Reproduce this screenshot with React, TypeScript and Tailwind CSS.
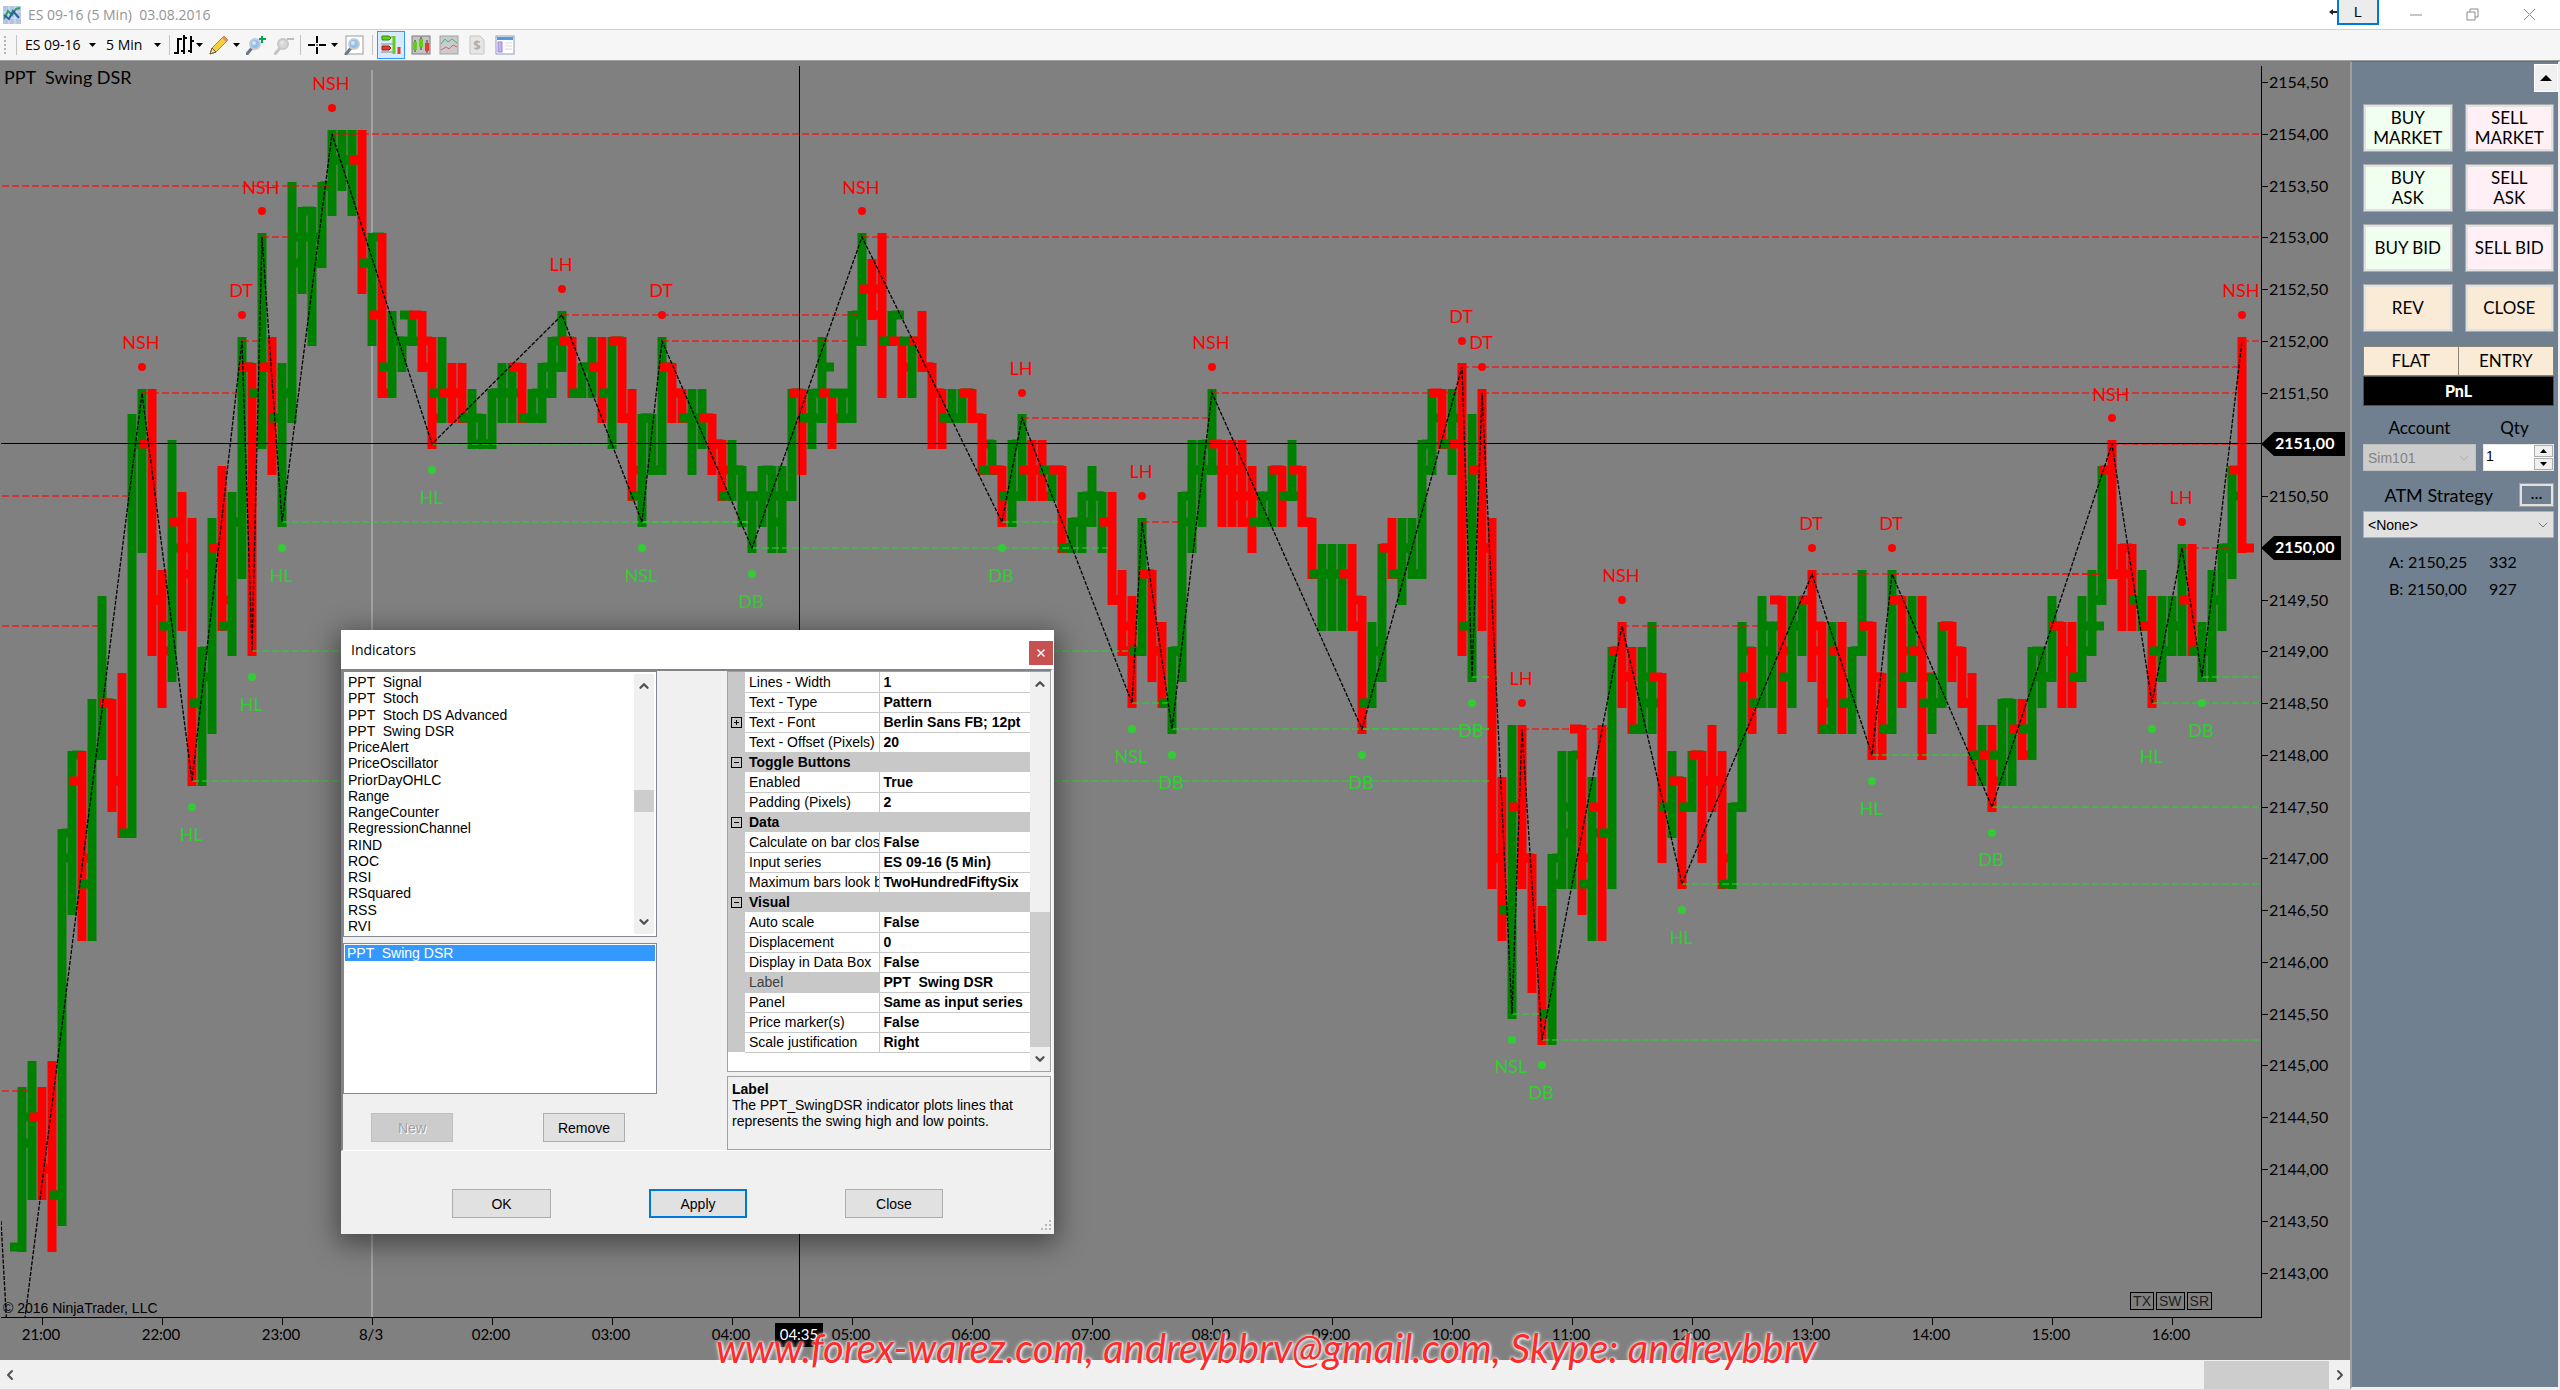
import React from "react";
import { ChevronDown, ChevronLeft, ChevronRight, ChevronUp, X } from "lucide-react";

/* ---------- chart data: one entry per 5 minute bar, in quarter-point ticks above 2143,00 ---------- */

const BARS = `
g1,7,1,5 g6,8,3,6 r6,7,3,4 r4,8,1,3 g3,17,2,17 g16,20,14,20 r19,20,13,16 g15,22,13,20 g20,26,20,22 r22,22,18,19
r19,23,17,17 g17,33,17,32 g32,34,28,32 r32,34,24,26 r26,27,22,24 g25,32,23,28 r29,30,25,28 r27,29,19,22 g22,24,19,23 g24,29,21,28
r28,31,25,26 g25,30,24,29 g29,36,27,35 r35,35,24,34 g34,40,32,35 r35,36,31,33 g33,35,29,34 g34,42,33,39 g40,41,38,41 g40,41,36,40
g39,42,39,42 g42,44,41,43 g43,44,42,43 g43,44,41,43 r43,44,38,39 g39,40,36,40 r37,40,34,34 g35,37,34,36 g36,36,35,36 g37,37,36,36
r37,37,35,35 r36,36,32,33 g34,36,33,34 r34,35,33,34 r34,35,33,33 g33,34,32,32 g33,33,32,32 g32,34,32,34 g34,35,33,34 g34,35,33,34
r35,35,33,33 g33,34,33,34 g33,35,33,35 g34,36,34,36 g35,37,35,36 r36,36,34,34 g34,35,34,35 g35,36,34,35 r35,36,33,34 g34,36,32,36
r36,36,33,33 r33,34,30,31 g30,33,29,33 g33,33,31,31 g31,36,31,35 r35,35,33,34 r34,34,33,33 g33,34,31,33 g33,34,32,33 r33,33,31,32
r32,32,30,31 g30,32,30,31 g31,31,29,30 g30,30,28,30 g30,31,29,31 g30,31,28,30 g29,31,28,30 g30,34,30,34 r34,34,31,33 g33,34,32,34
g33,36,33,35 r34,34,32,33 g34,34,33,34 g33,37,33,37 g36,40,36,38 r38,39,37,37 r38,40,34,36 g36,37,36,37 r36,36,34,35 g36,36,34,36
r36,37,35,35 r35,35,32,34 r34,34,32,33 g33,34,33,33 g33,34,33,34 r34,34,33,33 r33,33,31,32 g31,32,31,31 r31,31,29,30 g30,32,29,32
g30,33,30,31 r31,32,30,31 r31,32,30,30 g31,31,30,31 r31,31,28,28 g28,29,28,29 g29,30,28,30 g29,31,29,30 g30,30,28,29 r29,30,26,26
r26,27,24,25 r24,26,22,24 g24,29,24,27 r27,27,23,24 r24,25,22,22 g22,24,21,24 g24,30,23,30 g29,32,28,31 g31,32,29,32 g31,34,31,31
r32,32,29,31 r31,32,29,31 r30,32,29,29 r30,31,28,30 g29,30,29,30 g29,31,29,31 r31,31,29,30 g30,32,30,30 r31,31,29,29 r29,29,27,27
g27,28,25,27 g27,28,25,27 g27,28,25,27 r27,28,25,25 r26,26,21,22 g22,25,22,24 g23,28,23,28 r28,29,27,27 g27,29,26,28 g28,29,27,27
g27,32,27,32 g31,34,31,33 r34,34,32,32 g32,34,31,33 r32,35,24,25 g25,33,23,31 r31,34,25,28 r28,29,15,16 r16,19,13,14 g14,21,10,18
r18,21,15,16 r16,16,11,13 r13,14,9,10 g10,16,9,16 g15,20,15,18 g17,20,15,20 r21,21,14,16 g15,19,13,17 r18,21,13,17 g17,24,15,24
r24,25,22,23 r23,24,21,21 g21,24,21,23 g22,25,21,22 r23,23,16,18 g18,20,17,19 r19,19,15,18 g18,20,18,20 r20,20,16,19 r19,21,18,19
r19,20,15,16 g15,18,15,18 g18,25,18,24 r23,24,21,22 g22,26,22,25 g24,25,22,25 r26,26,21,24 g23,26,22,25 g25,26,24,26 r26,27,23,25
r24,25,21,22 g21,25,21,24 r24,25,21,22 g22,24,21,24 g24,27,24,25 r25,25,20,23 r23,23,20,21 g21,27,21,26 r26,26,22,24 g23,26,23,24
r24,26,20,23 g22,23,21,22 g22,25,22,25 r25,25,23,24 r24,24,22,22 r22,23,19,20 g20,21,19,20 r20,21,18,19 g20,22,19,22 g22,22,19,21
r21,22,20,20 g21,24,20,24 g23,24,22,23 g23,26,23,25 r25,25,22,24 r24,25,22,23 g23,26,23,25 g24,27,24,25 g26,31,26,31 r31,32,27,27
r27,28,25,27 r28,28,25,26 g26,27,25,25 r25,26,22,24 g24,26,23,24 g24,26,24,25 g25,28,24,26 r26,28,24,24 g24,25,23,24 g24,27,23,26
g26,28,25,28 g28,31,27,30 r31,36,28,28`
  .trim()
  .split(/\s+/)
  .map((bar, i) => {
    const [open, high, low, close] = bar.slice(1).split(",").map(Number);
    return { x: 22 + i * 10, up: bar[0] === "g", open, high, low, close };
  });

type Swing = [number, number, string, "high" | "low"];
const SWINGS: Swing[] = [
  [142, 34, "NSH", "high"], [192, 19, "HL", "low"], [242, 36, "DT", "high"], [252, 24, "HL", "low"],
  [262, 40, "NSH", "high"], [282, 29, "HL", "low"], [332, 44, "NSH", "high"], [432, 32, "HL", "low"],
  [562, 37, "LH", "high"], [642, 29, "NSL", "low"], [662, 36, "DT", "high"], [752, 28, "DB", "low"],
  [862, 40, "NSH", "high"], [1002, 29, "DB", "low"], [1022, 33, "LH", "high"], [1132, 22, "NSL", "low"],
  [1142, 29, "LH", "high"], [1172, 21, "DB", "low"], [1212, 34, "NSH", "high"], [1362, 21, "DB", "low"],
  [1462, 35, "DT", "high"], [1472, 23, "DB", "low"], [1482, 34, "DT", "high"], [1512, 10, "NSL", "low"],
  [1522, 21, "LH", "high"], [1542, 9, "DB", "low"], [1622, 25, "NSH", "high"], [1682, 15, "HL", "low"],
  [1812, 27, "DT", "high"], [1872, 20, "HL", "low"], [1892, 27, "DT", "high"], [1992, 18, "DB", "low"],
  [2112, 32, "NSH", "high"], [2152, 22, "HL", "low"], [2182, 28, "LH", "high"], [2202, 23, "DB", "low"],
  [2242, 36, "NSH", "high"],
];

/* from x, to x, tick level */
const RESISTANCE = [
  [2, 330, 42], [332, 2260, 44], [262, 290, 40], [242, 258, 36], [142, 238, 34], [2, 128, 30], [2, 98, 25],
  [2, 28, 7], [862, 2260, 40], [562, 858, 37], [662, 848, 36], [1022, 1210, 33], [1142, 1180, 29],
  [1212, 1458, 34], [1462, 2240, 35], [1482, 2240, 34], [1522, 1608, 21], [1622, 1758, 25],
  [1812, 2100, 27], [1892, 2100, 27], [2112, 2238, 32], [2182, 2230, 28], [2242, 2260, 36],
];
const SUPPORT = [
  [252, 1128, 24], [192, 1489, 19], [282, 748, 29], [642, 748, 29], [432, 628, 32], [752, 1108, 28],
  [1002, 1058, 29], [1132, 1168, 22], [1172, 1489, 21], [1362, 1489, 21], [1472, 1489, 23],
  [1512, 1540, 10], [1542, 2260, 9], [1682, 2260, 15], [1872, 1970, 20], [1992, 2260, 18],
  [2152, 2260, 22], [2202, 2260, 23],
];

const TIMES: [number, string][] = [
  [42, "21:00"], [162, "22:00"], [282, "23:00"], [372, "8/3"], [492, "02:00"], [612, "03:00"], [732, "04:00"],
  [852, "05:00"], [972, "06:00"], [1092, "07:00"], [1212, "08:00"], [1332, "09:00"], [1452, "10:00"],
  [1572, "11:00"], [1692, "12:00"], [1812, "13:00"], [1932, "14:00"], [2052, "15:00"], [2172, "16:00"],
];

const TOP = 61;
const yOf = (tick: number) => Math.round(1272.5 - TOP - tick * 25.88);
const priceLabel = (tick: number) => (2143 + tick / 4).toFixed(2).replace(".", ",");

function Chart() {
  const axisY = 1317 - TOP;
  const zigzag = SWINGS.map(([x, t]) => `${x},${yOf(t)}`).join(" ");
  return (
    <svg
      viewBox="0 0 2350 1299"
      preserveAspectRatio="xMinYMin meet"
      className="block h-full w-full font-['Lato',sans-serif]"
      role="img"
      aria-label="ES 09-16 five minute price chart"
    >
      <defs>
        <clipPath id="plot">
          <rect x="1" y="0" width="2260" height={axisY} />
        </clipPath>
      </defs>
      <g clipPath="url(#plot)">
        <line x1="372" x2="372" y1="9" y2={axisY} stroke="#c4c4c4" />
        {BARS.map((b) => (
          <path
            key={b.x}
            d={`M${b.x} ${yOf(b.high) - 4}V${yOf(b.low) + 5}M${b.x - 12} ${yOf(b.open)}H${b.x}M${b.x} ${yOf(b.close)}H${b.x + 12}`}
            stroke={b.up ? "#008000" : "#ff0000"}
            strokeWidth="9"
          />
        ))}
        {RESISTANCE.map(([a, b, t], i) => (
          <line key={i} x1={a} x2={b} y1={yOf(t)} y2={yOf(t)} stroke="#ff0000" strokeOpacity="0.55" strokeWidth="2" strokeDasharray="7 3" />
        ))}
        {SUPPORT.map(([a, b, t], i) => (
          <line key={i} x1={a} x2={b} y1={yOf(t)} y2={yOf(t)} stroke="#32cd32" strokeOpacity="0.55" strokeWidth="2" strokeDasharray="7 3" />
        ))}
        <polyline points={`1,1160 12,1360 ${zigzag}`} fill="none" stroke="#000" strokeWidth="1.3" strokeDasharray="4 1.5" />
        {SWINGS.map(([x, t, label, kind]) => {
          const dir = kind === "high" ? 1 : -1;
          const color = kind === "high" ? "#ff0000" : "#32cd32";
          return (
            <g key={x} fill={color}>
              <circle cx={x} cy={yOf(t + dir)} r="4" />
              <text x={x - 1} y={yOf(t + 2 * dir) + 8} fontSize="18" textAnchor="middle">
                {label}
              </text>
            </g>
          );
        })}
        <path d={`M0 382H2261M799 5V${axisY}`} stroke="#000" shapeRendering="crispEdges" />
      </g>
      <text x="4" y="23" fontSize="18" xmlSpace="preserve" className="whitespace-pre">
        {"PPT  Swing DSR"}
      </text>
      <text x="3" y="1252" fontSize="14" className="font-['Liberation_Sans',Arial,sans-serif]">
        © 2016 NinjaTrader, LLC
      </text>

      <path d={`M2261 5V${axisY}H1`} fill="none" stroke="#000" strokeWidth="1" shapeRendering="crispEdges" />
      {Array.from({ length: 24 }, (_, i) => i * 2).map((t) => (
        <g key={t}>
          <line x1="2261" x2="2268" y1={yOf(t)} y2={yOf(t)} stroke="#000" shapeRendering="crispEdges" />
          <text x="2269" y={yOf(t) + 6} fontSize="16">
            {priceLabel(t)}
          </text>
        </g>
      ))}
      {[
        [32, 2345],
        [28, 2341],
      ].map(([t, right]) => (
        <g key={t}>
          <path d={`M2261 ${yOf(t)}L2274 ${yOf(t) - 12}H${right}V${yOf(t) + 12}H2274Z`} />
          <text x="2275" y={yOf(t) + 5} fontSize="16" fill="#fff" className="font-bold">
            {priceLabel(t)}
          </text>
        </g>
      ))}
      {TIMES.map(([x, label]) => (
        <g key={x}>
          <line x1={x} x2={x} y1={axisY} y2={axisY + 8} stroke="#000" shapeRendering="crispEdges" />
          <text x={x - 1} y="1279" fontSize="15" textAnchor="middle">
            {label}
          </text>
        </g>
      ))}
      <rect x="775" y="1262" width="48" height="24" />
      <text x="799" y="1279" fontSize="15" fill="#fff" textAnchor="middle">
        04:35
      </text>
    </svg>
  );
}

/* ---------- toolbar ---------- */

function Caret() {
  return (
    <svg viewBox="0 0 7 4" className="h-1 w-[7px]" aria-hidden="true">
      <path d="M0 0H7L3.5 4Z" fill="#000" />
    </svg>
  );
}

function Separator() {
  return <div className="h-5 w-px bg-[#c3c3c3]" />;
}

function Icon({ children, label }: { children: React.ReactNode; label: string }) {
  return (
    <svg viewBox="0 0 20 20" className="size-5" role="img" aria-label={label} fill="none">
      {children}
    </svg>
  );
}

function Lens({ x = 0, y = 0, muted = false }: { x?: number; y?: number; muted?: boolean }) {
  return (
    <g transform={`translate(${x} ${y})`}>
      <path d="M1 19L6 13" stroke={muted ? "#c4c4c4" : "#6e7884"} strokeWidth="3" strokeLinecap="round" />
      <circle cx="9" cy="9" r="5" fill={muted ? "#d6d6d6" : "#8fc1ea"} stroke={muted ? "#c8c8c8" : "#c3ccd4"} strokeWidth="2" />
      <circle cx="8" cy="8" r="2" fill={muted ? "#e4e4e4" : "#cfe6fa"} />
    </g>
  );
}

function Toolbar() {
  return (
    <div className="flex h-8 shrink-0 items-center border-t border-[#d0d0d0] border-b border-b-[#a0a0a0] bg-[#f6f6f6] font-['Open_Sans','Noto_Sans',sans-serif] text-sm text-black">
      <div className="ml-1 mr-2.5 grid gap-0.5">
        {[0, 1, 2, 3, 4].map((d) => (
          <span key={d} className="size-0.5 bg-[#b4b4b4]" />
        ))}
      </div>
      <Separator />
      <button className="ml-2 flex items-center gap-2">
        <span className="w-14 text-left whitespace-nowrap">ES 09-16</span>
        <Caret />
      </button>
      <button className="ml-2.5 mr-2 flex items-center gap-2">
        <span className="w-10 text-left whitespace-nowrap">5 Min</span>
        <Caret />
      </button>
      <Separator />
      <button className="ml-1 flex items-center gap-0.5">
        <Icon label="Chart style">
          <path d="M4 3V19M0 18H4M4 4H8M10 0V19M7 16H10M10 3H13M17 1V18M14 16H17M17 6H20" stroke="#000" strokeWidth="2" />
        </Icon>
        <Caret />
      </button>
      <button className="ml-1.5 flex items-center gap-1">
        <Icon label="Drawing tools">
          <path d="M1 19L3 13L15 1L19 5L7 17Z" fill="#f6cf3a" stroke="#b98b1c" />
          <path d="M13 3L15 1L19 5L17 7Z" fill="#e98a7c" />
          <path d="M1 19L3 13L7 17Z" fill="#e8d6b4" stroke="#6b5a35" />
        </Icon>
        <Caret />
      </button>
      <button className="ml-1.5">
        <Icon label="Zoom in">
          <Lens />
          <path d="M13 4H20M16 1V8" stroke="#00a651" strokeWidth="2" />
        </Icon>
      </button>
      <button className="ml-2" disabled>
        <Icon label="Zoom out">
          <Lens muted />
          <path d="M13 4H20" stroke="#bdbdbd" strokeWidth="2" />
        </Icon>
      </button>
      <div className="mx-1.5 flex h-5">
        <Separator />
      </div>
      <button className="flex items-center gap-1">
        <Icon label="Crosshair">
          <path d="M10 1V8M10 12V19M1 10H8M12 10H19" stroke="#000" strokeWidth="2" />
          <path d="M9 10H11" stroke="#000" />
        </Icon>
        <Caret />
      </button>
      <button className="ml-1.5">
        <Icon label="Data box">
          <rect x="2" y="1" width="17" height="18" fill="#fff" stroke="#9b9b9b" />
          <Lens x={1} y={0} />
        </Icon>
      </button>
      <div className="mr-1 ml-2">
        <Separator />
      </div>
      <button className="flex h-7 w-7 items-center justify-center border border-[#3399ff] bg-[#d6ebff]" aria-pressed="true">
        <Icon label="Chart trader">
          <path d="M0 2H12M0 9H12M0 17H12" stroke="#b9b9b9" strokeWidth="2" />
          <path d="M1 1H8L10 3L8 5H1Z" fill="#5ed016" stroke="#3b8a0b" />
          <path d="M1 11H8L10 13L8 15H1Z" fill="#e43b2e" stroke="#9a1e15" />
          <path d="M13 1V19" stroke="#5ed016" strokeWidth="3" />
          <path d="M18 12V19" stroke="#e43b2e" strokeWidth="3" />
        </Icon>
      </button>
      <button className="ml-1.5">
        <Icon label="Chart bars">
          <rect x="1" y="1" width="18" height="18" fill="#c4c4c4" stroke="#7b7b7b" />
          <path d="M4 5V17M10 2V15M16 5V18" stroke="#333" />
          <path d="M4 7V15M10 4V12" stroke="#5ed016" strokeWidth="4" />
          <path d="M16 8V16" stroke="#e43b2e" strokeWidth="4" />
        </Icon>
      </button>
      <button className="ml-2">
        <Icon label="Indicators">
          <rect x="1" y="1" width="18" height="18" fill="#cbcbcb" stroke="#a3a3a3" />
          <path d="M2 9L6 4L9 7L13 4L18 8" stroke="#44b37a" />
          <path d="M2 15L7 12L10 14L14 10L18 12" stroke="#e4605c" />
        </Icon>
      </button>
      <button className="ml-2" disabled>
        <Icon label="Strategies">
          <path d="M3 1H13L17 5V19H3Z" fill="#e6e6e6" stroke="#c6c6c6" />
          <text x="10" y="15" fontSize="13" textAnchor="middle" fill="#adadad" className="font-bold">
            $
          </text>
        </Icon>
      </button>
      <button className="ml-2">
        <Icon label="Properties">
          <rect x="1" y="1" width="18" height="18" fill="#fff" stroke="#8e9bb5" />
          <rect x="2" y="2" width="16" height="3" fill="#4d9be8" />
          <rect x="3" y="7" width="4" height="10" fill="#c4b0f4" stroke="#9b86e0" />
          <path d="M10 8H17M10 11H17M10 14H17" stroke="#dadada" />
        </Icon>
      </button>
    </div>
  );
}

function TitleBar() {
  return (
    <header className="flex h-[29px] shrink-0 items-center bg-white font-['Open_Sans','Noto_Sans',sans-serif] text-sm text-[#949494]">
      <svg viewBox="0 0 18 18" className="ml-[3px] size-[18px]" aria-hidden="true">
        <rect width="18" height="18" fill="#b5c4e4" />
        <path d="M0 6H18M0 12H18M6 0V18M12 0V18" stroke="#dfe6f4" />
        <path d="M1 13L5 5L9 9L13 3L17 2" stroke="#2fa45c" strokeWidth="2" fill="none" />
        <path d="M1 9L6 13L10 5L16 12" stroke="#2d5fa8" strokeWidth="2" fill="none" />
      </svg>
      <h1 className="ml-[7px] whitespace-pre">{"ES 09-16 (5 Min)  03.08.2016"}</h1>
      <div className="ml-auto flex h-full items-center">
        <svg viewBox="0 0 8 8" className="mb-1.5 size-2" aria-hidden="true">
          <path d="M0 4L4 1V7Z" fill="#222" />
          <path d="M3 4H8" stroke="#222" strokeWidth="2" />
        </svg>
        <button className="-mt-1 mr-[26px] h-[29px] w-[42px] self-start border-2 border-[#0078d7] bg-[#ececec] pt-0.5 font-['Liberation_Sans',Arial,sans-serif] text-sm text-black">
          L
        </button>
        <button aria-label="Minimize" className="flex w-[22px] justify-center">
          <svg viewBox="0 0 12 12" className="size-3" stroke="#8c8c8c"><path d="M0 6H12" /></svg>
        </button>
        <button aria-label="Restore" className="ml-[34px] flex w-[22px] justify-center">
          <svg viewBox="0 0 13 13" className="size-[13px]" stroke="#8c8c8c" fill="none">
            <path d="M1 4H9V12H1ZM4 4V1H12V9H9" />
          </svg>
        </button>
        <button aria-label="Close" className="mr-5 ml-[35px] flex w-[22px] justify-center">
          <svg viewBox="0 0 13 13" className="size-[13px]" stroke="#8c8c8c"><path d="M1 1L12 12M12 1L1 12" /></svg>
        </button>
      </div>
    </header>
  );
}

/* ---------- order panel ---------- */

const ORDERS = [
  { lines: ["BUY", "MARKET"], tone: "bg-[#f0fff0]" },
  { lines: ["SELL", "MARKET"], tone: "bg-[#fff0f5]" },
  { lines: ["BUY", "ASK"], tone: "bg-[#f0fff0]" },
  { lines: ["SELL", "ASK"], tone: "bg-[#fff0f5]" },
  { lines: ["BUY BID"], tone: "bg-[#f0fff0]" },
  { lines: ["SELL BID"], tone: "bg-[#fff0f5]" },
  { lines: ["REV"], tone: "bg-[#faebd7]" },
  { lines: ["CLOSE"], tone: "bg-[#faebd7]" },
];

function OrderPanel() {
  return (
    <aside className="flex w-[210px] shrink-0 flex-col border-x-2 border-t border-b-[3px] border-[#a0a0a0] border-t-[#696969] border-r-[#f0f0f0] border-b-[#f0f0f0] bg-[#708090] font-['Lato',sans-serif] text-[17px] leading-5 text-black">
      <button aria-label="Collapse" className="mt-0.5 flex h-7 w-6 items-center justify-center self-end border border-white bg-[#f0f0f0]">
        <svg viewBox="0 0 12 6" className="h-1.5 w-3" aria-hidden="true">
          <path d="M0 6H12L6 0Z" />
        </svg>
      </button>
      <div className="mr-1 ml-[11px] pt-3">
        <div className="grid grid-cols-2 gap-3">
          {ORDERS.map((o) => (
            <button key={o.lines.join(" ")} className="h-12 border border-[#a9a9a9] bg-[#e1e1e1] p-0.5">
              <span className={`flex h-full w-full flex-col items-center justify-center whitespace-nowrap ${o.tone}`}>
                {o.lines.map((l) => (
                  <span key={l}>{l}</span>
                ))}
              </span>
            </button>
          ))}
        </div>
        <div className="mt-[14px] grid grid-cols-2 divide-x divide-[#8a8378] border border-[#8a8378]">
          <button className="h-7 bg-[#faebd7]">FLAT</button>
          <button className="h-7 bg-[#faebd7]">ENTRY</button>
        </div>
        <output className="flex h-[30px] items-center justify-center border border-[#505050] bg-black text-base font-black text-white">PnL</output>

        <div className="mt-3 grid grid-cols-[113px_minmax(0,1fr)] gap-x-[7px] text-center">
          <label htmlFor="account">Account</label>
          <label htmlFor="qty" className="pr-2">Qty</label>
          <div className="relative mt-1.5">
            <select id="account" disabled className="h-[27px] w-full appearance-none border border-[#bfbfbf] bg-[#cccccc] pl-1 font-['Liberation_Sans',Arial,sans-serif] text-sm text-[#838383] opacity-100">
              <option>Sim101</option>
            </select>
            <ChevronDown className="pointer-events-none absolute top-1.5 right-1 size-4 text-[#a0a0a0]" strokeWidth={1} />
          </div>
          <div className="mt-1.5 flex h-[27px] min-w-0 border border-[#e8e8e8] bg-white">
            <input id="qty" defaultValue="1" className="w-0 min-w-0 flex-1 pb-1 pl-0.5 font-['Liberation_Sans',Arial,sans-serif] text-sm outline-none" />
            <span className="flex w-[19px] shrink-0 flex-col gap-px">
              <button aria-label="Increase" className="flex flex-1 items-center justify-center border border-[#adadad] bg-[#f0f0f0]">
                <svg viewBox="0 0 7 4" className="h-1 w-[7px]"><path d="M0 4H7L3.5 0Z" /></svg>
              </button>
              <button aria-label="Decrease" className="flex flex-1 items-center justify-center border border-[#adadad] bg-[#f0f0f0]">
                <Caret />
              </button>
            </span>
          </div>
        </div>

        <div className="mt-3 flex h-6 items-center justify-end">
          <label htmlFor="atm" className="mr-[26px] text-[18px]">ATM Strategy</label>
          <button aria-label="Edit strategies" className="flex h-6 w-[35px] items-center justify-center border-[3px] border-[#e1e1e1] pb-1 outline outline-[#a0a0a0] -outline-offset-1">...</button>
        </div>
        <div className="relative mt-1">
          <select id="atm" className="h-[27px] w-full appearance-none border border-[#adadad] bg-[#e1e1e1] pl-1 font-['Liberation_Sans',Arial,sans-serif] text-sm">
            <option>&lt;None&gt;</option>
          </select>
          <ChevronDown className="pointer-events-none absolute top-1.5 right-[3px] size-4 text-[#404040]" strokeWidth={1} />
        </div>
        <dl className="mt-[14px] ml-[26px] grid grid-cols-[76px_1fr] gap-x-6 gap-y-[7px] text-base leading-5 whitespace-nowrap">
          <dt>A: 2150,25</dt>
          <dd>332</dd>
          <dt>B: 2150,00</dt>
          <dd>927</dd>
        </dl>
      </div>
    </aside>
  );
}

/* ---------- indicators dialog ---------- */

const INDICATORS = [
  "PPT  Signal", "PPT  Stoch", "PPT  Stoch DS Advanced", "PPT  Swing DSR", "PriceAlert", "PriceOscillator",
  "PriorDayOHLC", "Range", "RangeCounter", "RegressionChannel", "RIND", "ROC", "RSI", "RSquared", "RSS", "RVI",
];

type Row = { name: string; value?: string; plus?: boolean; active?: boolean };
const ROWS: Row[] = [
  { name: "Lines - Width", value: "1" },
  { name: "Text - Type", value: "Pattern" },
  { name: "Text - Font", value: "Berlin Sans FB; 12pt", plus: true },
  { name: "Text - Offset (Pixels)", value: "20" },
  { name: "Toggle Buttons" },
  { name: "Enabled", value: "True" },
  { name: "Padding (Pixels)", value: "2" },
  { name: "Data" },
  { name: "Calculate on bar close", value: "False" },
  { name: "Input series", value: "ES 09-16 (5 Min)" },
  { name: "Maximum bars look back", value: "TwoHundredFiftySix" },
  { name: "Visual" },
  { name: "Auto scale", value: "False" },
  { name: "Displacement", value: "0" },
  { name: "Display in Data Box", value: "False" },
  { name: "Label", value: "PPT  Swing DSR", active: true },
  { name: "Panel", value: "Same as input series" },
  { name: "Price marker(s)", value: "False" },
  { name: "Scale justification", value: "Right" },
];

function Expander({ plus = false }: { plus?: boolean }) {
  return (
    <button aria-label={plus ? "Expand" : "Collapse"} className="block pl-[3px]">
      <svg viewBox="0 0 11 11" className="size-[11px]" stroke="#000" fill="none" shapeRendering="crispEdges">
        <rect x="0.5" y="0.5" width="10" height="10" />
        <path d={plus ? "M3 5.5H8M5.5 3V8" : "M3 5.5H8"} />
      </svg>
    </button>
  );
}

function VScroll({ thumb }: { thumb: string }) {
  return (
    <div className="flex w-5 shrink-0 flex-col items-center bg-[#f0f0f0]">
      <button aria-label="Scroll up" className="flex h-6 w-full items-center justify-center">
        <ChevronUp className="size-3.5 text-[#505050]" strokeWidth={4} />
      </button>
      <div className="flex w-full flex-1 flex-col">
        <div className={`w-full bg-[#cdcdcd] ${thumb}`} />
      </div>
      <button aria-label="Scroll down" className="flex h-6 w-full items-center justify-center">
        <ChevronDown className="size-3.5 text-[#505050]" strokeWidth={4} />
      </button>
    </div>
  );
}

const dialogButton = "h-[29px] border border-[#adadad] bg-[#e1e1e1]";

function IndicatorsDialog() {
  return (
    <section
      role="dialog"
      aria-label="Indicators"
      className="absolute top-[630px] left-[341px] flex h-[604px] w-[713px] flex-col bg-[#f0f0f0] font-['Liberation_Sans',Arial,sans-serif] text-sm leading-4 text-black shadow-[0_6px_26px_4px_rgba(0,0,0,0.45)]"
    >
      <div className="flex h-[39px] shrink-0 items-start bg-white">
        <h2 className="mt-2.5 ml-2.5 font-['Open_Sans','Noto_Sans',sans-serif] text-sm leading-5">Indicators</h2>
        <button aria-label="Close dialog" className="mt-[11px] mr-px ml-auto flex h-6 w-6 items-center justify-center bg-[#c75050] text-white">
          <X className="size-3" strokeWidth={3} />
        </button>
      </div>
      <div className="mr-0.5 flex h-[482px] shrink-0 justify-between border-t-2 border-r border-b border-l-2 border-t-[#808388] border-r-white border-b-white border-l-[#808388]">
        <div className="flex w-[314px] flex-col">
          <div className="flex h-[266px] shrink-0 border border-[#828790] bg-white p-0.5">
            <ul role="listbox" aria-label="Available indicators" className="flex flex-1 flex-col justify-between pl-0.5 whitespace-pre">
              {INDICATORS.map((name) => (
                <li key={name} role="option" aria-selected="false">{name}</li>
              ))}
            </ul>
            <VScroll thumb="mt-[92px] h-[22px]" />
          </div>
          <ul role="listbox" aria-label="Active indicators" className="mt-1.5 h-[151px] shrink-0 border border-[#828790] bg-white p-px whitespace-pre">
            <li role="option" aria-selected="true" className="bg-[#3399ff] pl-0.5 text-white">{"PPT  Swing DSR"}</li>
          </ul>
          <div className="mt-[19px] ml-7 flex gap-[90px]">
            <button disabled className="h-[29px] w-[82px] border border-[#bfbfbf] bg-[#cccccc] text-[#a0a0a0] [text-shadow:1px_1px_0_#fff]">New</button>
            <button className={`${dialogButton} w-[82px]`}>Remove</button>
          </div>
        </div>
        <div className="flex w-[324px] flex-col">
          <div className="flex h-[401px] shrink-0 border border-[#a0a0a0] bg-white">
            <div className="min-w-0 flex-1">
              <table className="w-full table-fixed border-collapse">
                <colgroup>
                  <col className="w-[17px]" />
                  <col className="w-[134px]" />
                  <col />
                </colgroup>
                <tbody>
                  {ROWS.map((row) =>
                    row.value === undefined ? (
                      <tr key={row.name} className="h-5 bg-[#c8c8c8]">
                        <td className="p-0"><Expander /></td>
                        <th scope="rowgroup" colSpan={2} className="p-0 pl-1 text-left">{row.name}</th>
                      </tr>
                    ) : (
                      <tr key={row.name} className="h-5">
                        <td className="bg-[#c8c8c8] p-0">{row.plus && <Expander plus />}</td>
                        <th
                          scope="row"
                          className={
                            row.active
                              ? "overflow-hidden border-r border-b border-[#c8c8c8] bg-[#c8c8c8] p-0 pl-1 text-left font-normal whitespace-nowrap text-[#404040]"
                              : "overflow-hidden border-r border-b border-[#c8c8c8] p-0 pl-1 text-left font-normal whitespace-nowrap"
                          }
                        >
                          {row.name}
                        </th>
                        <td className="overflow-hidden border-b border-[#c8c8c8] p-0 pl-1 font-bold whitespace-pre">{row.value}</td>
                      </tr>
                    ),
                  )}
                </tbody>
              </table>
            </div>
            <VScroll thumb="mt-auto h-[135px]" />
          </div>
          <div className="mt-1 flex-1 border border-[#a0a0a0] px-1 pt-1">
            <h3 className="font-bold">Label</h3>
            <p>The PPT_SwingDSR indicator plots lines that represents the swing high and low points.</p>
          </div>
        </div>
      </div>
      <div className="mt-[38px] flex justify-center gap-[98px]">
        <button className={`${dialogButton} w-[99px]`}>OK</button>
        <button className="h-[29px] w-[98px] border-2 border-[#0078d7] bg-[#e1e1e1]">Apply</button>
        <button className={`${dialogButton} w-[98px]`}>Close</button>
      </div>
      <svg viewBox="0 0 12 12" className="absolute right-0.5 bottom-0.5 size-3" fill="#b8b8b8" aria-hidden="true">
        <path d="M9 0h2v2h-2zM9 4h2v2h-2zM5 4h2v2h-2zM9 8h2v2h-2zM5 8h2v2h-2zM1 8h2v2h-2z" />
      </svg>
    </section>
  );
}

/* ---------- page ---------- */

export default function App() {
  return (
    <div className="relative flex h-screen flex-col overflow-hidden bg-[#f0f0f0]">
      <TitleBar />
      <Toolbar />
      <div className="flex min-h-0 flex-1">
        <main className="flex min-w-0 flex-1 flex-col">
          <div className="relative min-h-0 flex-1 bg-[#808080]">
            <Chart />
            <div className="absolute right-[138px] bottom-[50px] flex gap-0.5 font-['Liberation_Sans',Arial,sans-serif] text-sm text-[#202020]">
              {["TX", "SW", "SR"].map((b) => (
                <button key={b} className="h-[18px] border border-black px-0.5 leading-4">{b}</button>
              ))}
            </div>
          </div>
          <div className="flex h-[30px] shrink-0 items-center border-b border-[#d8d8d8] bg-[#f0f0f0] text-[#505050]">
            <button aria-label="Scroll left" className="flex w-5 justify-center">
              <ChevronLeft className="size-4" strokeWidth={3} />
            </button>
            <div className="flex h-7 flex-1 justify-end">
              <div className="w-[125px] bg-[#cdcdcd]" />
            </div>
            <button aria-label="Scroll right" className="flex w-[21px] justify-center">
              <ChevronRight className="size-4" strokeWidth={3} />
            </button>
          </div>
        </main>
        <OrderPanel />
      </div>
      <IndicatorsDialog />
      <p className="pointer-events-none absolute bottom-5 left-[716px] font-['Lato',cursive] text-[40px] leading-[44px] whitespace-nowrap text-[#ff2a2a] italic [text-shadow:0_0_2px_#fff,0_0_4px_#fff,1px_1px_3px_#fff]">
        www.forex-warez.com, andreybbrv@gmail.com, Skype: andreybbrv
      </p>
    </div>
  );
}
